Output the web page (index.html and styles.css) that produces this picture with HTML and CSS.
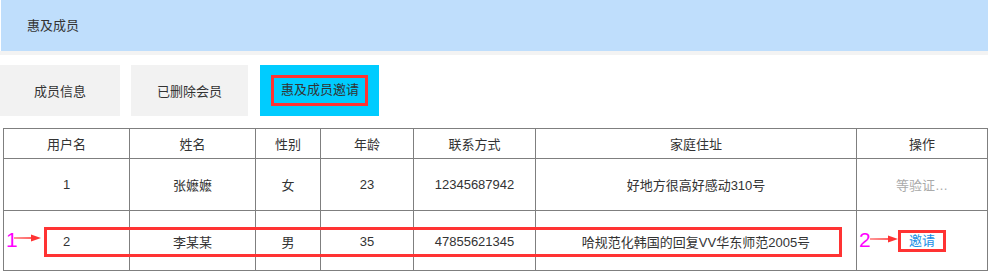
FILE: index.html
```html
<!DOCTYPE html>
<html lang="zh-CN">
  <head>
    <meta charset="UTF-8" />
    <title>惠及成员</title>
    <link rel="stylesheet" href="styles.css">
  </head>
  <body>
    <div class="page">
      <div class="top">惠及成员</div>
      <div class="strip"></div>
      <div class="tabs">
        <a href="javascript:;" class="tab">成员信息</a>
        <a href="javascript:;" class="tab">已删除会员</a>
        <a href="javascript:;" class="tab active"><span class="mark">惠及成员邀请</span></a>
      </div>
      <table class="list">
        <colgroup>
          <col style="width: 126px" />
          <col style="width: 126px" />
          <col style="width: 65px" />
          <col style="width: 93px" />
          <col style="width: 122px" />
          <col style="width: 321px" />
          <col />
        </colgroup>
        <tr class="head">
          <th>用户名</th>
          <th>姓名</th>
          <th>性别</th>
          <th>年龄</th>
          <th>联系方式</th>
          <th>家庭住址</th>
          <th>操作</th>
        </tr>
        <tr class="row1">
          <td>1</td>
          <td>张嬷嬷</td>
          <td>女</td>
          <td>23</td>
          <td>12345687942</td>
          <td>好地方很高好感动310号</td>
          <td class="wait">等验证…</td>
        </tr>
        <tr class="row2">
          <td>2</td>
          <td>李某某</td>
          <td>男</td>
          <td>35</td>
          <td>47855621345</td>
          <td>哈规范化韩国的回复VV华东师范2005号</td>
          <td><a href="javascript:;" class="invite">邀请</a></td>
        </tr>
      </table>

      <!-- 标注 -->
      <div class="note-box"></div>
      <span class="note-num n1">1</span>
      <svg class="note-arrow a1" width="27" height="8" viewBox="0 0 27 8">
        <path d="M0 3.6 L17 3.2 L17 0.5 L27 4 L17 7.5 L17 4.8 L0 4.4 Z" fill="#f33" />
      </svg>
      <span class="note-num n2">2</span>
      <svg class="note-arrow a2" width="28" height="8" viewBox="0 0 28 8">
        <path d="M0 3.6 L18 3.2 L18 0.5 L28 4 L18 7.5 L18 4.8 L0 4.4 Z" fill="#f33" />
      </svg>
    </div>
  </body>
</html>
```

FILE: styles.css
```css
* {
  margin: 0px;
  padding: 0px;
  text-decoration: none;
  box-sizing: border-box;
}
body {
  font-family: "Liberation Sans", "Noto Sans CJK SC", sans-serif;
  font-size: 13px;
  color: #333;
  background-color: #fff;
}
.page {
  position: relative;
  width: 988px;
  height: 271px;
  overflow: hidden;
}
.top {
  height: 51px;
  margin-left: 1px;
  background-color: #bfdefc;
  line-height: 51px;
  padding-left: 26px;
}
.strip {
  height: 4px;
  background-color: #f3f3f3;
}
.tabs {
  display: flex;
  gap: 11px;
  margin-top: 10px;
}
.tab {
  display: flex;
  align-items: center;
  justify-content: center;
  width: 120px;
  height: 51px;
  background-color: #f2f2f2;
  color: #333;
}
.tab:nth-child(2) {
  width: 117px;
}
.tab.active {
  width: 119px;
  margin-left: 1px;
  background-color: #00ccff;
}
.mark {
  display: inline-block;
  border: 3px solid #f33;
  padding: 3px 6px 4px 7px;
  line-height: 18px;
}
.list {
  margin: 12px 0 0 3px;
  width: 985px;
  border-collapse: collapse;
  table-layout: fixed;
}
.list th,
.list td {
  border: 1px solid #7f7f7f;
  text-align: center;
  font-weight: normal;
  color: #333;
}
.head th {
  height: 30px;
}
.row1 td {
  height: 52px;
}
.row2 td {
  height: 60px;
  padding-top: 1px;
}
.list td.wait {
  color: #aaa;
}
.invite {
  display: inline-block;
  border: 3px solid #f33;
  padding: 0 8px 0 8px;
  line-height: 16px;
  color: #1a8fe6;
}
.note-box {
  position: absolute;
  left: 44px;
  top: 227px;
  width: 798px;
  height: 30px;
  border: 3px solid #f33;
}
.note-num {
  position: absolute;
  font-size: 21px;
  line-height: 21px;
  color: #f0f;
  font-family: "Liberation Sans", sans-serif;
}
.n1 {
  left: 6px;
  top: 229px;
}
.n2 {
  left: 859px;
  top: 229px;
}
.note-arrow {
  position: absolute;
}
.a1 {
  left: 14px;
  top: 234px;
}
.a2 {
  left: 870px;
  top: 235px;
}
```
